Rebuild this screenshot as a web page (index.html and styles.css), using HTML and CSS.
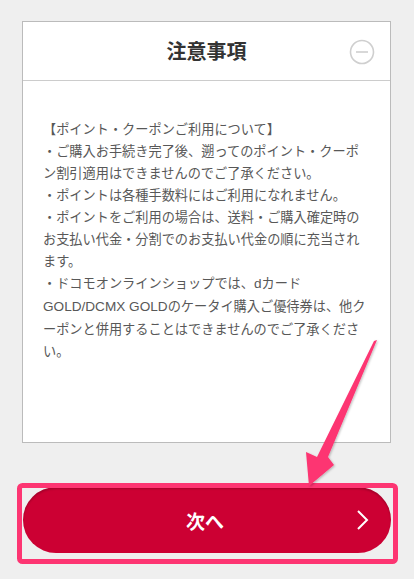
FILE: index.html
```html
<!DOCTYPE html>
<html lang="ja">
<head>
<meta charset="utf-8">
<link rel="stylesheet" href="styles.css">
</head>
<body>
<div class="page">
  <section class="card">
    <header class="card-head">
      <h2 class="title">注意事項</h2>
      <svg class="toggle" width="26" height="26" viewBox="0 0 26 26"><circle cx="13" cy="13" r="11.5" fill="none" stroke="#cfcfcf" stroke-width="1.6"/><line x1="7" y1="13" x2="19" y2="13" stroke="#cfcfcf" stroke-width="1.6"/></svg>
    </header>
    <div class="card-body">
      <p class="notes">【ポイント・クーポンご利用について】<br>・ご購入お手続き完了後、遡ってのポイント・クーポ<br>ン割引適用はできませんのでご了承ください。<br>・ポイントは各種手数料にはご利用になれません。<br>・ポイントをご利用の場合は、送料・ご購入確定時の<br>お支払い代金・分割でのお支払い代金の順に充当され<br>ます。<br>・ドコモオンラインショップでは、<span class="lat">d</span>カード<br><span class="lat">GOLD/DCMX GOLD</span>のケータイ購入ご優待券は、他ク<br>ーポンと併用することはできませんのでご了承くださ<br>い。</p>
    </div>
  </section>
  <div class="actions">
    <button class="next">
      <span class="next-label">次へ</span>
      <svg class="chev" width="14" height="22" viewBox="0 0 14 22"><polyline points="2,2 11,11 2,20" fill="none" stroke="#fff" stroke-width="2"/></svg>
    </button>
  </div>
  <svg class="overlay" width="414" height="579" viewBox="0 0 414 579">
    <defs>
      <filter id="sh" x="-20%" y="-20%" width="140%" height="140%"><feDropShadow dx="1" dy="1" stdDeviation="1" flood-color="#000" flood-opacity="0.25"/></filter>
    </defs>
    <rect x="19.5" y="485.5" width="376" height="76" rx="3" fill="none" stroke="#fd3572" stroke-width="5"/>
    <polygon filter="url(#sh)" fill="#fd3572" points="377,340 328,457 334,465 309,486 306,452 317,457 374,341"/>
  </svg>
</div>
</body>
</html>
```

FILE: styles.css
```css
html, body {
  margin: 0;
  padding: 0;
  background: #efefef;
}
.page {
  position: relative;
  width: 414px;
  height: 579px;
  overflow: hidden;
  padding-top: 21px;
  box-sizing: border-box;
  font-family: "Noto Sans CJK JP", "Noto Sans", sans-serif;
}
.card {
  margin: 0 23px 0 22px;
  background: #fff;
  border: 1px solid #bbbbbb;
  height: 422px;
  box-sizing: border-box;
}
.card-head {
  height: 59px;
  border-bottom: 1px solid #cccccc;
  display: flex;
  align-items: center;
  justify-content: center;
  position: relative;
  box-sizing: border-box;
}
.title {
  margin: 0;
  font-size: 20px;
  font-weight: 700;
  color: #333;
  line-height: 1;
  letter-spacing: 0;
}
.toggle {
  position: absolute;
  right: 15px;
  top: 17px;
}
.card-body {
  padding: 37px 10px 0 20px;
}
.notes {
  margin: 0;
  font-size: 13.2px;
  line-height: 22px;
  color: #585858;
  white-space: nowrap;
}
.lat {
  font-family: "Liberation Sans", Arial, sans-serif;
  font-size: 13.6px;
}
.actions {
  margin-top: 44px;
  padding: 0 23px;
}
.next {
  width: 368px;
  height: 66px;
  border: none;
  border-radius: 33px;
  background: #cc0033;
  box-shadow: inset 0 2px 2px rgba(0,0,0,0.18);
  display: flex;
  align-items: center;
  justify-content: center;
  position: relative;
  padding: 0;
  font-family: "Noto Sans CJK JP", "Noto Sans", sans-serif;
  cursor: pointer;
}
.next-label {
  color: #fff;
  font-size: 19px;
  font-weight: 700;
  line-height: 1;
  margin-left: -4px;
}
.chev {
  position: absolute;
  right: 21px;
  top: 22px;
}
.overlay {
  position: absolute;
  left: 0;
  top: 0;
  pointer-events: none;
}
```
